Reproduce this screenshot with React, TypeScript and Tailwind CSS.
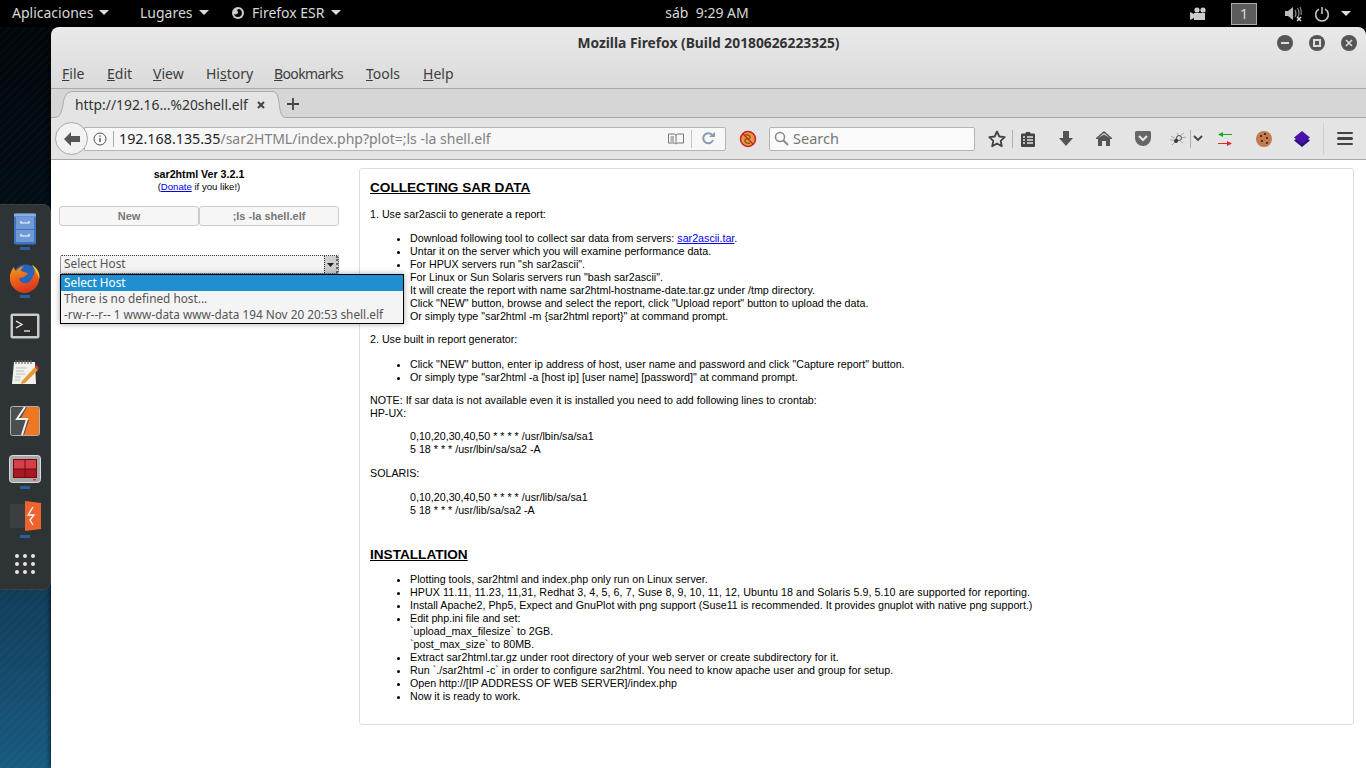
import React from "react";

const UI = { fontFamily: '"Noto Sans", sans-serif' };

function Caret({ c = "#ddd" }: { c?: string }) {
  return (
    <svg width="10" height="5" viewBox="0 0 10 5" className="shrink-0">
      <path d="M0 0h10L5 5z" fill={c} />
    </svg>
  );
}

function TopBar() {
  return (
    <div className="h-[27px] bg-black text-[#d8d8d8] flex items-center text-[14px] shrink-0 relative" style={UI}>
      <div className="flex items-center ml-[12px] gap-[6px] w-[128px] pb-[2px]">
        <span>Aplicaciones</span>
        <Caret />
      </div>
      <div className="flex items-center gap-[6px] w-[91px] pb-[2px]">
        <span>Lugares</span>
        <Caret />
      </div>
      <div className="flex items-center pb-[2px]">
        <svg width="14" height="14" viewBox="0 0 14 14">
          <circle cx="7" cy="7" r="6" fill="#ccc" />
          <path d="M7 3a4 4 0 1 1-4 5c2 1 4 0 4-2-1-1-1-2 0-3z" fill="#000" />
        </svg>
        <span className="ml-[7px]">Firefox ESR</span>
        <span className="ml-[6px]"><Caret /></span>
      </div>
      <div className="ml-[323px] w-[87px] text-center pb-[2px] whitespace-nowrap">sáb&nbsp; 9:29 AM</div>
      <div className="ml-auto flex items-center">
        <svg width="18" height="14" viewBox="0 0 18 14">
          <path d="M0 5l4 2V6h11v7H4v-2l-4 2z" fill="#ccc" />
          <circle cx="7" cy="3" r="2.6" fill="#ccc" />
          <circle cx="13" cy="3" r="2.6" fill="#ccc" />
        </svg>
        <div className="ml-[23px] w-[26px] h-[22px] bg-[#5c5c5c] border border-[#aaa] flex items-center justify-center text-[15px]">1</div>
        <svg width="18" height="16" viewBox="0 0 18 16" className="ml-[28px]">
          <path d="M0 5h3l5-4v13l-5-4H0z" fill="#bbb" />
          <path d="M10 4q2 3.500 0 7M12.500 2q3 5.500 0 10M15 1q2 4 1 8" stroke="#888" fill="none" strokeWidth="1.200" />
          <path d="M12 11l4 4m0-4l-4 4" stroke="#ddd" strokeWidth="1.500" />
        </svg>
        <svg width="16" height="16" viewBox="0 0 16 16" className="ml-[11px]">
          <path d="M5 3.200a6.300 6.300 0 1 0 6 0" fill="none" stroke="#ccc" strokeWidth="1.500" />
          <path d="M8 1v7" stroke="#ccc" strokeWidth="1.500" />
        </svg>
        <span className="ml-[11px] mr-[15px]"><Caret /></span>
      </div>
    </div>
  );
}

function DockMark() {
  return <div className="w-[10px] h-[3px] bg-[#2a5f99]" />;
}

function Dock() {
  return (
    <div className="relative z-10 mt-[177px] h-[386px] w-[51px] bg-[#2e3336] rounded-r-[8px] border border-l-0 border-[#3d4245] flex flex-col items-center">
      <svg width="24" height="32" viewBox="0 0 24 32" className="mt-[8px]">
        <rect x="1" y="0.500" width="22" height="31" rx="2" fill="#3f73c4" />
        <rect x="1" y="0.500" width="22" height="3" rx="1" fill="#86aee0" />
        <path d="M3 4h18v12H3zM3 17h18v12H3z" fill="#6f9ad6" />
        <path d="M8 8v2h8V8M8 21v2h8v-2" stroke="#fff" strokeWidth="1.200" fill="none" />
      </svg>
      <div className="mt-[2px]"><DockMark /></div>
      <svg width="30" height="30" viewBox="0 0 30 30" className="mt-[13px]">
        <defs>
          <linearGradient id="fx" x1="0" y1="0" x2="0.300" y2="1">
            <stop offset="0" stopColor="#f7a21b" />
            <stop offset="0.600" stopColor="#ea5a1c" />
            <stop offset="1" stopColor="#d9381e" />
          </linearGradient>
        </defs>
        <circle cx="15.500" cy="14" r="12.500" fill="#2a64b8" />
        <path d="M22 2c4 2 7 6 7.500 11 0 2-.5 4-1 5-1-6-3-11-6.500-16z" fill="#f9c31f" />
        <path d="M15 30A15 15 0 0 1 1 9c.5-2 2-4 3-5 0 2 1 3 2 4 2-3 5-4 8-5-2 2-3 3-3 5 2 1 5 1 7 3l-3 2c-1 2-5 1-6 3 1 3 4 5 8 4 3-1 5-3 6-7 1-1 2-3 1-6 3 3 5 7 5 10a15 15 0 0 1-15 13z" fill="url(#fx)" />
      </svg>
      <div className="mt-[2px]"><DockMark /></div>
      <svg width="30" height="26" viewBox="0 0 30 26" className="mt-[15px]">
        <rect x="0.500" y="0.500" width="29" height="25" rx="2" fill="#c9c9c9" />
        <rect x="3" y="3" width="24" height="20" fill="#2c2c2c" />
        <path d="M6 8l6 3.500-6 3.500" stroke="#eee" fill="none" strokeWidth="1.300" />
        <path d="M14 18h6" stroke="#eee" strokeWidth="1.300" />
      </svg>
      <svg width="30" height="28" viewBox="0 0 30 28" className="mt-[19px]">
        <path d="M4 4h21l1 22H2z" fill="#f2f2ec" />
        <path d="M6 2v4M9 2v4M12 2v4M15 2v4M18 2v4M21 2v4" stroke="#666" strokeWidth="1.200" />
        <path d="M6 10h10M6 13h8M6 16h9M5 19h6M5 22h5" stroke="#bbb" />
        <path d="M12 23l13-14 3 3-13 13-4 1z" fill="#e8982e" />
        <path d="M25 9l2-2 2 3-1 2z" fill="#d33" />
      </svg>
      <svg width="30" height="30" viewBox="0 0 30 30" className="mt-[20px]">
        <rect x="0.500" y="0.500" width="29" height="29" rx="2" fill="#4c4f52" stroke="#b0b0b0" />
        <path d="M17 1h12v28H14l5-15H10z" fill="#ef7722" />
        <path d="M15 1L7 13h10l-5 16" stroke="#f0f0f0" fill="none" strokeWidth="2" />
      </svg>
      <svg width="32" height="28" viewBox="0 0 32 28" className="mt-[19px]">
        <rect x="0.500" y="0.500" width="31" height="27" rx="3" fill="#a8a8a8" stroke="#ddd" />
        <rect x="4" y="4" width="24" height="19" fill="#6f0b12" />
        <path d="M5 5h10.500v8.500H5zM16.500 5H27v8.500H16.500z" fill="#d3404a" />
        <path d="M5 14.500h10.500V22H5zM16.500 14.500H27V22H16.500z" fill="#a91822" />
        <path d="M24 24h3v1.500h-3z" fill="#e33" />
      </svg>
      <div className="mt-[3px]"><DockMark /></div>
      <svg width="32" height="30" viewBox="0 0 32 30" className="mt-[12px]">
        <path d="M1 3h16v24H1z" fill="#3c3f41" />
        <path d="M16 0l16 2v26l-16 2z" fill="#f0622e" />
        <path d="M24 6l-5 8h6l-4 5 3 5" stroke="#fff" fill="none" strokeWidth="1.300" />
      </svg>
      <div className="mt-[4px]"><DockMark /></div>
      <div className="mt-[16px] grid grid-cols-3 gap-x-[4px] gap-y-[4px]">
        {Array.from({ length: 9 }).map((_, i) => (
          <div key={i} className="w-[4px] h-[4px] rounded-full bg-[#e4e4e4]" />
        ))}
      </div>
    </div>
  );
}

function MenuBar() {
  const items: [string, string, string, number][] = [
    ["", "F", "ile", 45],
    ["", "E", "dit", 46],
    ["", "V", "iew", 53],
    ["Hi", "s", "tory", 68],
    ["", "B", "ookmarks", 92],
    ["", "T", "ools", 57],
    ["", "H", "elp", 40],
  ];
  return (
    <div className="h-[27px] flex items-center pl-[11px] pb-[2px] text-[14px] text-[#3d3d3d]">
      {items.map(([a, b, c, w]) => (
        <div key={b + c} style={{ width: w, letterSpacing: c === "ookmarks" ? "-0.6px" : undefined }}>
          {a}
          <u>{b}</u>
          {c}
        </div>
      ))}
    </div>
  );
}

function TabRow() {
  return (
    <div className="h-[30px] bg-[#d6d6d6] border-t border-[#a9a9a9] flex items-end">
      <div className="w-[2px] h-px bg-[#a9a9a9]" />
      <div className="flex items-end h-[27px] shrink-0">
        <svg width="20" height="27" viewBox="0 0 20 27" className="block shrink-0 -mr-px">
          <path d="M0 26.500c7 0 8-3 10-13C11 5 14 .500 20 .500V27H0z" fill="#e4e4e4" />
          <path d="M0 26.500c7 0 8-3 10-13C11 5 14 .500 20 .500" fill="none" stroke="#a9a9a9" />
        </svg>
        <div className="h-[27px] w-[201px] shrink-0 bg-[#e4e4e4] border-t border-[#a9a9a9] flex items-center text-[13.850px] text-[#333]">
          <span className="ml-[3px] whitespace-nowrap">http://192.16...%20shell.elf</span>
          <svg width="8" height="8" viewBox="0 0 8 8" className="ml-[9px] shrink-0">
            <path d="M1 1l6 6m0-6L1 7" stroke="#444" strokeWidth="2" />
          </svg>
        </div>
        <svg width="14" height="27" viewBox="0 0 14 27" className="block shrink-0 -ml-px">
          <path d="M0 .500c5 0 6 4 7 11 1 9 2 15 7 15V27H0z" fill="#e4e4e4" />
          <path d="M0 .500c5 0 6 4 7 11 1 9 2 15 7 15" fill="none" stroke="#a9a9a9" />
        </svg>
      </div>
      <div className="flex-1 h-[27px] border-b border-[#a9a9a9] flex items-center">
        <svg width="14" height="14" viewBox="0 0 14 14" className="mr-auto">
          <path d="M7 1v12M1 7h12" stroke="#444" strokeWidth="1.800" />
        </svg>
      </div>
    </div>
  );
}

function NavRow() {
  return (
    <div className="h-[42px] bg-[#e4e4e4] border-b border-[#a9a9a9] flex items-center relative">
      <div className="w-[33px] h-[33px] ml-[4px] rounded-full bg-[#f2f2f2] border border-[#a8a8a8] flex items-center justify-center z-10 shrink-0 -mr-[3px]">
        <svg width="16" height="14" viewBox="0 0 16 14">
          <path d="M7 0L0 7l7 7v-4h9V4H7z" fill="#555" />
        </svg>
      </div>
      <div className="w-[642px] h-[24px] bg-[#f7f7f7] border border-[#b5b5b5] rounded-r-[2px] flex items-center text-[14px] text-[#808080] -ml-[1px] shrink-0 whitespace-nowrap">
        <svg width="14" height="14" viewBox="0 0 14 14" className="ml-[8px] shrink-0">
          <circle cx="7" cy="7" r="6" fill="none" stroke="#555" />
          <path d="M7 6v4M7 3.500v1.300" stroke="#555" strokeWidth="1.400" />
        </svg>
        <div className="w-px h-[16px] bg-[#aaa] ml-[6px] mr-[5px]" />
        <span className="text-[#222] text-[14.300px]">192.168.135.35</span>
        <span>/sar2HTML/index.php?plot=;ls -la shell.elf</span>
        <svg width="16" height="12" viewBox="0 0 16 12" className="ml-auto shrink-0">
          <path d="M.500 1h6l1.500 1 1.500-1h6v9h-6L8 11l-1.500-1h-6zM8 2v8" fill="none" stroke="#777" />
          <path d="M2.500 4h3.500M2.500 6h3.500M2.500 8h3.500" stroke="#777" />
        </svg>
        <div className="w-px h-[18px] bg-[#c4c4c4] ml-[7px]" />
        <svg width="13" height="13" viewBox="0 0 13 13" className="ml-[10px] mr-[10px] shrink-0">
          <path d="M11 8a5 5 0 1 1-1-5" fill="none" stroke="#8a9bb0" strokeWidth="2" />
          <path d="M7 5h6V0z" fill="#8a9bb0" />
        </svg>
      </div>
      <svg width="18" height="18" viewBox="0 0 18 18" className="ml-[13px] shrink-0">
        <circle cx="9" cy="9" r="7.500" fill="#e89a3a" stroke="#cc1f2a" strokeWidth="1.500" />
        <path d="M6 5c3-1 6 1 5 3-1 1-4 0-5 2-1 2 2 4 5 3" stroke="#8a5a20" strokeWidth="1.500" fill="none" />
        <path d="M3.500 3.500l11 11" stroke="#cc1f2a" strokeWidth="1.300" />
      </svg>
      <div className="ml-[12px] w-[206px] h-[24px] bg-[#fafafa] border border-[#b5b5b5] rounded-[2px] flex items-center text-[14.500px] text-[#777] shrink-0">
        <svg width="15" height="15" viewBox="0 0 15 15" className="ml-[4px] mr-[4px]">
          <circle cx="6" cy="6" r="4.500" fill="none" stroke="#888" strokeWidth="1.500" />
          <path d="M9.500 9.500L14 14" stroke="#888" strokeWidth="2" />
        </svg>
        Search
      </div>
      <div className="flex items-center ml-[13px]">
        <svg width="18" height="18" viewBox="0 0 18 18">
          <path d="M9 1.500l2.300 5 5.400.6-4 3.700 1.100 5.400L9 13.500l-4.800 2.700 1.100-5.400-4-3.700 5.400-.6z" fill="none" stroke="#444" strokeWidth="1.800" strokeLinejoin="round" />
        </svg>
        <div className="w-px h-[18px] bg-[#b0b0b0] ml-[6px]" />
        <svg width="14" height="16" viewBox="0 0 14 16" className="ml-[8px]">
          <path d="M1 2.500h3.500L5 1h4l.500 1.500H13a1 1 0 0 1 1 1V15a1 1 0 0 1-1 1H1a1 1 0 0 1-1-1V3.500a1 1 0 0 1 1-1z" fill="#444" />
          <path d="M2 6h2M2 9h2M2 12h2M6 6h6M6 9h6M6 12h6" stroke="#e4e4e4" strokeWidth="1.300" />
        </svg>
        <svg width="14" height="15" viewBox="0 0 14 15" className="ml-[24px]">
          <path d="M4 0h6v7h4l-7 8-7-8h4z" fill="#555" />
        </svg>
        <svg width="16" height="15" viewBox="0 0 16 15" className="ml-[23px]">
          <path d="M8 0L0 7v1h2v7h4v-5h4v5h4V8h2V7z" fill="#555" />
          <path d="M8 2L2 7l6-3.500L14 7z" fill="#e4e4e4" />
        </svg>
        <svg width="16" height="15" viewBox="0 0 16 15" className="ml-[23px]">
          <path d="M1.500 0h13A1.500 1.500 0 0 1 16 1.500V7a8 8 0 0 1-16 0V1.500A1.500 1.500 0 0 1 1.500 0z" fill="#666" />
          <path d="M4 5l4 4 4-4" stroke="#e4e4e4" strokeWidth="2.200" fill="none" />
        </svg>
        <svg width="16" height="14" viewBox="0 0 16 14" className="ml-[19px]">
          <circle cx="9" cy="6" r="2.500" fill="none" stroke="#444" />
          <circle cx="6" cy="9" r="2" fill="#333" />
          <path d="M1 4l5 3M0 8h4M2 13l3-3M14 1L10 4M16 5l-5 1M13 11L9 8M7 1l2 3" stroke="#888" strokeWidth="0.700" />
        </svg>
        <div className="w-px h-[18px] bg-[#b0b0b0] ml-[4px]" />
        <svg width="10" height="7" viewBox="0 0 10 7" className="ml-[2px]">
          <path d="M1 1l4 4 4-4" stroke="#444" strokeWidth="1.800" fill="none" />
        </svg>
        <svg width="14" height="16" viewBox="0 0 14 16" className="ml-[15px]">
          <path d="M14 3H5V1L0 3.500 5 6V4h9z" fill="#19a81f" />
          <path d="M0 12h9v-2l5 2.500L9 15v-2H0z" fill="#ee2222" />
        </svg>
        <svg width="16" height="16" viewBox="0 0 16 16" className="ml-[24px]">
          <circle cx="8" cy="8" r="8" fill="#c47a4c" />
          <circle cx="5" cy="5" r="1" fill="#222" />
          <circle cx="9" cy="3" r="1" fill="#222" />
          <circle cx="11" cy="7" r="1" fill="#222" />
          <circle cx="6" cy="10" r="1" fill="#222" />
          <circle cx="11" cy="12" r="1" fill="#222" />
        </svg>
        <svg width="16" height="16" viewBox="0 0 16 16" className="ml-[22px]">
          <path d="M8 3.500l8 6-8 6.500-8-6.500z" fill="#28107a" />
          <path d="M8 0l8 6.500-8 6.500-8-6.500z" fill="#4a12a8" />
        </svg>
        <div className="w-px h-[32px] bg-[#cfcfcf] ml-[13px]" />
        <div className="ml-[13px] w-[16px] flex flex-col gap-[3px]">
          <div className="h-[2.500px] bg-[#444] rounded-full" />
          <div className="h-[2.500px] bg-[#444] rounded-full" />
          <div className="h-[2.500px] bg-[#444] rounded-full" />
        </div>
      </div>
    </div>
  );
}

function Sidebar() {
  return (
    <div className="w-[308px] shrink-0 relative">
      <div className="pl-[8px] w-[288px]">
        <div className="pt-[8px] text-center text-[10.667px] font-bold leading-[13px] text-black">sar2html Ver 3.2.1</div>
        <div className="text-center text-[9.600px] leading-[12px] text-black">
          (<a className="text-[#0000ee] underline">Donate</a> if you like!)
        </div>
        <div className="flex mt-[13px]">
          <div className="w-[140px] h-[20px] bg-[#f6f6f6] border border-[#ccc] rounded-[3px] text-center text-[11px] font-bold leading-[18px] text-[#777]">New</div>
          <div className="w-[140px] h-[20px] bg-[#f6f6f6] border border-[#ccc] rounded-[3px] text-center text-[11px] font-bold leading-[18px] text-[#777]">;ls -la shell.elf</div>
        </div>
        <div className="mt-[29px] ml-[1px] w-[279px] h-[19px] bg-[#f4f4f4] border border-dotted border-[#333] rounded-[2px] flex items-center text-[11.800px] text-[#555]" style={UI}>
          <span className="ml-[3px] pb-[2px]">Select Host</span>
          <div className="ml-auto h-[17px] w-[14px] bg-[#cfcfcf] border-l border-dotted border-[#333] border-r-2 border-r-[#666] flex items-center justify-center">
            <svg width="7" height="4" viewBox="0 0 7 4"><path d="M0 0h7L3.500 4z" fill="#222" /></svg>
          </div>
        </div>
      </div>
      <div className="absolute left-[9px] top-[114px] w-[344px] h-[50px] bg-[#f4f4f4] border border-black shadow-[0_0_6px_rgba(0,0,0,0.35)] text-[11.800px] leading-[15px] text-[#555] z-10" style={UI}>
        <div className="h-[16px] bg-[#1e8fd0] text-white pl-[3px]">Select Host</div>
        <div className="h-[16px] pl-[3px]">There is no defined host...</div>
        <div className="h-[16px] pl-[3px] whitespace-nowrap">-rw-r--r-- 1 www-data www-data 194 Nov 20 20:53 shell.elf</div>
      </div>
    </div>
  );
}

function Bullets({ items, className = "" }: { items: React.ReactNode[]; className?: string }) {
  return (
    <ul className={"list-disc pl-[40px] " + className}>
      {items.map((it, i) => (
        <li key={i}>{it}</li>
      ))}
    </ul>
  );
}

function Panel() {
  return (
    <div className="w-[995px] h-[557px] mt-[8px] bg-white border border-[#ddd] rounded-[3px] px-[10px] pt-[11px] text-[10.700px] leading-[13px] text-black">
      <h2 className="text-[13.600px] leading-[15px] font-bold underline">COLLECTING SAR DATA</h2>
      <p className="mt-[13px]">1. Use sar2ascii to generate a report:</p>
      <Bullets
        className="mt-[11px]"
        items={[
          <>Download following tool to collect sar data from servers: <a className="text-[#0000ee] underline">sar2ascii.tar</a>.</>,
          "Untar it on the server which you will examine performance data.",
          'For HPUX servers run "sh sar2ascii".',
          'For Linux or Sun Solaris servers run "bash sar2ascii".',
          "It will create the report with name sar2html-hostname-date.tar.gz under /tmp directory.",
          'Click "NEW" button, browse and select the report, click "Upload report" button to upload the data.',
          'Or simply type "sar2html -m {sar2html report}" at command prompt.',
        ]}
      />
      <p className="mt-[10px]">2. Use built in report generator:</p>
      <Bullets
        className="mt-[12px]"
        items={[
          'Click "NEW" button, enter ip address of host, user name and password and click "Capture report" button.',
          'Or simply type "sar2html -a [host ip] [user name] [password]" at command prompt.',
        ]}
      />
      <p className="mt-[10px]">NOTE: If sar data is not available even it is installed you need to add following lines to crontab:<br />HP-UX:</p>
      <p className="mt-[10px] pl-[40px]">0,10,20,30,40,50 * * * * /usr/lbin/sa/sa1<br />5 18 * * * /usr/lbin/sa/sa2 -A</p>
      <p className="mt-[11px]">SOLARIS:</p>
      <p className="mt-[11px] pl-[40px]">0,10,20,30,40,50 * * * * /usr/lib/sa/sa1<br />5 18 * * * /usr/lib/sa/sa2 -A</p>
      <h2 className="mt-[30px] text-[13.600px] leading-[15px] font-bold underline">INSTALLATION</h2>
      <Bullets
        className="mt-[11px]"
        items={[
          "Plotting tools, sar2html and index.php only run on Linux server.",
          <span className="tracking-[0.07px]">HPUX 11.11, 11.23, 11,31, Redhat 3, 4, 5, 6, 7, Suse 8, 9, 10, 11, 12, Ubuntu 18 and Solaris 5.9, 5.10 are supported for reporting.</span>,
          "Install Apache2, Php5, Expect and GnuPlot with png support (Suse11 is recommended. It provides gnuplot with native png support.)",
          <>Edit php.ini file and set:<br />`upload_max_filesize` to 2GB.<br />`post_max_size` to 80MB.</>,
          <span className="tracking-[0.03px]">Extract sar2html.tar.gz under root directory of your web server or create subdirectory for it.</span>,
          <span className="tracking-[0.02px]">Run `./sar2html -c` in order to configure sar2html. You need to know apache user and group for setup.</span>,
          "Open http://[IP ADDRESS OF WEB SERVER]/index.php",
          "Now it is ready to work.",
        ]}
      />
    </div>
  );
}

function FirefoxWindow() {
  return (
    <div className="flex-1 h-full flex flex-col rounded-t-[8px] overflow-hidden shadow-[0_0_5px_rgba(0,0,0,0.9)]">
      <div className="bg-[linear-gradient(#e9e9e9,#d6d6d6_60%)]" style={UI}>
        <div className="h-[34px] flex items-center relative">
          <div className="w-full text-center font-bold text-[13.800px] text-[#333] pb-[2px]">Mozilla Firefox (Build 20180626223325)</div>
          <div className="absolute right-[9px] top-[8px] flex gap-[16px]">
            <div className="w-[16px] h-[16px] rounded-full bg-[#555] flex items-center justify-center"><div className="w-[8px] h-[2px] bg-[#ddd]" /></div>
            <div className="w-[16px] h-[16px] rounded-full bg-[#555] flex items-center justify-center"><div className="w-[8px] h-[8px] border-2 border-[#ddd]" /></div>
            <div className="w-[16px] h-[16px] rounded-full bg-[#555] flex items-center justify-center">
              <svg width="8" height="8" viewBox="0 0 8 8"><path d="M1 1l6 6m0-6L1 7" stroke="#ddd" strokeWidth="1.600" /></svg>
            </div>
          </div>
        </div>
        <MenuBar />
        <TabRow />
        <NavRow />
      </div>
      <div className="flex-1 bg-white flex" style={{ fontFamily: '"Liberation Sans", Arial, sans-serif' }}>
        <Sidebar />
        <Panel />
      </div>
    </div>
  );
}

export default function App() {
  return (
    <div className="w-[1366px] h-[768px] overflow-hidden flex flex-col bg-black">
      <TopBar />
      <div className="flex-1 flex min-h-0">
        <div className="w-[51px] shrink-0 bg-[repeating-linear-gradient(135deg,rgba(255,255,255,0.018)_0_2px,transparent_2px_6px),linear-gradient(#01060a_0%,#04121c_40%,#113c59_76%,#185a80_100%)]">
          <Dock />
        </div>
        <FirefoxWindow />
      </div>
    </div>
  );
}
